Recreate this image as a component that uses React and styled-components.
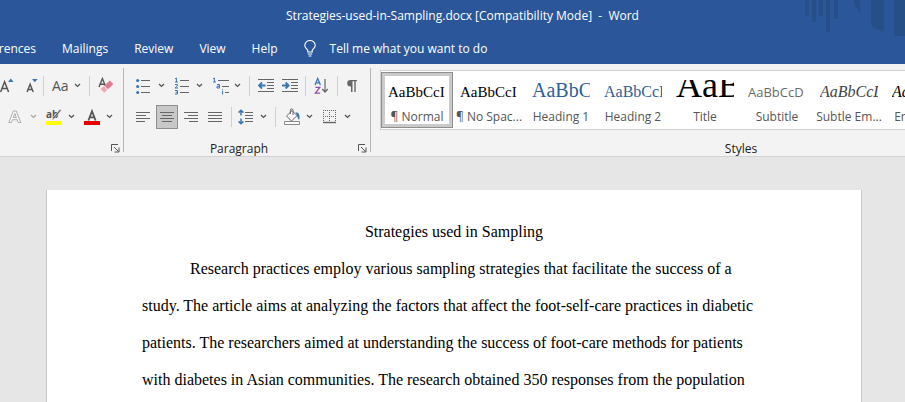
import React, { useState } from 'react';
import styled, { createGlobalStyle } from 'styled-components';

const tabs = ['Mailings', 'Review', 'View', 'Help'];

const styleList = [
  { name: '¶ Normal', sample: 'AaBbCcI', size: 15 },
  { name: '¶ No Spac...', sample: 'AaBbCcI', size: 15 },
  { name: 'Heading 1', sample: 'AaBbC', size: 20, color: '#2f5f96' },
  { name: 'Heading 2', sample: 'AaBbCcI', color: '#2f5f96' },
  { name: 'Title', sample: 'AaB', size: 36 },
  { name: 'Subtitle', sample: 'AaBbCcD', size: 13, color: '#6a6a6a', sans: true },
  { name: 'Subtle Em...', sample: 'AaBbCcL', color: '#444', italic: true },
  { name: 'Emphasis', sample: 'AaBbCcL', italic: true },
];

const alignments = [
  { name: 'Align Left', lines: [[0, 14], [0, 10], [0, 14], [0, 9]] },
  { name: 'Center', lines: [[0, 14], [2, 12], [0, 14], [2, 12]] },
  { name: 'Align Right', lines: [[0, 14], [4, 14], [0, 14], [5, 14]] },
  { name: 'Justify', lines: [[0, 14], [0, 14], [0, 14], [0, 14]] },
];

const Lines = ({ lines, top = 4, step = 3 }) =>
  lines.map(([from, to], idx) => (
    <path key={idx} d={`M${from} ${top + idx * step + 0.5}H${to}`} stroke="#666" />
  ));

const Chevron = ({ label, faded }) => (
  <ChevronButton aria-label={label}>
    <svg width="7" height="5" viewBox="0 0 7 5" fill="none" stroke={faded ? '#aaa' : '#555'} strokeWidth="1.3">
      <path d="M1 1L3.5 3.4L6 1" />
    </svg>
  </ChevronButton>
);

const Launcher = ({ label }) => (
  <LauncherButton aria-label={label}>
    <svg width="9" height="9" viewBox="0 0 9 9" fill="none" stroke="#555">
      <path d="M0.5 7V0.5H7M3 3L7.5 7.5M8 3.5V8H3.5" />
    </svg>
  </LauncherButton>
);

const FontGroup = () => (
  <Group $width={123}>
    <Row $end>
      <ToolButton aria-label="Increase Font Size">
        <svg width="18" height="18" viewBox="0 0 18 18">
          <path d="M4.6 15L8.6 4.8L12.6 15M6 11.6H11.2" fill="none" stroke="#555" strokeWidth="1.5" />
          <path d="M12 5L14.8 1.6L17.6 5Z" fill="#3a76b0" />
        </svg>
      </ToolButton>
      <ToolButton aria-label="Decrease Font Size">
        <svg width="18" height="18" viewBox="0 0 18 18">
          <path d="M7 15L10.1 7.2L13.2 15M8 12.5H12.2" fill="none" stroke="#555" strokeWidth="1.4" />
          <path d="M12 2L14.8 5.2L17.6 2Z" fill="#3a76b0" />
        </svg>
      </ToolButton>
      <Separator />
      <ToolButton aria-label="Change Case"><CaseText>Aa</CaseText></ToolButton>
      <Chevron label="Change Case options" />
      <Separator />
      <ToolButton aria-label="Clear All Formatting">
        <svg width="16" height="18" viewBox="0 0 16 18">
          <path d="M1 10L4.4 1.6L7.4 9M2.2 7.2H6.8" fill="none" stroke="#555" strokeWidth="1.4" />
          <path d="M2.5 12L5.6 9.2L9.2 12.8L6.3 15.8Z" fill="#f0a7b4" />
          <path d="M6.4 8.6L11.8 3.4L15.4 7L10 12.2Z" fill="#e27c91" />
        </svg>
      </ToolButton>
    </Row>
    <Row $end>
      <ToolButton aria-label="Text Effects">
        <svg width="14" height="16" viewBox="0 0 14 16">
          <path d="M0.8 13.5L5.4 2H8.2L12.8 13.5H10.2L9.2 10.7H4.4L3.4 13.5ZM5.2 8.6H8.4L6.8 4.4Z" fill="#fff" stroke="#aaa" />
        </svg>
      </ToolButton>
      <Chevron label="Text Effects options" faded />
      <ToolButton aria-label="Text Highlight Color">
        <svg width="16" height="18" viewBox="0 0 16 18">
          <text x="0" y="9.5" fontFamily="Open Sans, sans-serif" fontSize="10" fontWeight="700" fill="#555">ab</text>
          <path d="M15.6 2L8.5 10.5L6 12.3L7 9.4L13.8 1.6Z" fill="#666" stroke="#f3f3f3" strokeWidth="0.5" />
          <path d="M0 13H16V17H0Z" fill="#ff0" />
        </svg>
      </ToolButton>
      <Chevron label="Highlight options" />
      <ToolButton aria-label="Font Color">
        <svg width="16" height="18" viewBox="0 0 16 18">
          <path d="M4.4 12.5L8 3.2L11.6 12.5M5.6 9.3H10.4" fill="none" stroke="#555" strokeWidth="1.8" />
          <path d="M0 13H16V17H0Z" fill="#e60000" />
        </svg>
      </ToolButton>
      <Chevron label="Font Color options" />
    </Row>
    <Footer><Launcher label="Font Settings" /></Footer>
  </Group>
);

const ParagraphGroup = () => {
  const [align, setAlign] = useState('Center');
  return (
    <Group $width={246} $left={8}>
      <Row>
        <ToolButton aria-label="Bullets">
          <svg width="14" height="16" viewBox="0 0 14 16">
            <g fill="#3a76b0">
              <circle cx="1.7" cy="2.5" r="1.6" />
              <circle cx="1.7" cy="8.5" r="1.6" />
              <circle cx="1.7" cy="14.5" r="1.5" />
            </g>
            <path d="M5 2.5H14M5 8.5H14M5 14.5H14" stroke="#666" />
          </svg>
        </ToolButton>
        <Chevron label="Bullet options" />
        <ToolButton aria-label="Numbering">
          <svg width="16" height="18" viewBox="0 0 16 18" fill="none">
            <path d="M1 2L2.4 1V5M1 5H4M1 7.5H3.3V9L1 11H4M1 13.5H3.5V17H1M1.6 15.2H3.5" stroke="#3a76b0" />
            <path d="M6 3.5H15M6 9.5H15M6 15.5H15" stroke="#666" />
          </svg>
        </ToolButton>
        <Chevron label="Numbering options" />
        <ToolButton aria-label="Multilevel List">
          <svg width="18" height="18" viewBox="0 0 18 18" fill="none">
            <path d="M1 2L2.4 1V5M1 5H4M5 7.5H7.5V11H5V9.2H7.5M10.6 12.2V13.2M10.6 14V17.5" stroke="#3a76b0" />
            <path d="M6 3.5H17M10 9.5H17M13 15.5H17" stroke="#666" />
          </svg>
        </ToolButton>
        <Chevron label="Multilevel options" />
        <Separator />
        <ToolButton aria-label="Decrease Indent">
          <svg width="16" height="14" viewBox="0 0 16 14" fill="none">
            <path d="M0 0.5H16M9 3.5H16M9 6.5H16M9 9.5H16M0 12.5H16" stroke="#666" />
            <path d="M7.5 6.5H1.5M4 3.5L1 6.5L4 9.5" stroke="#3a76b0" strokeWidth="1.8" />
          </svg>
        </ToolButton>
        <ToolButton aria-label="Increase Indent">
          <svg width="16" height="14" viewBox="0 0 16 14" fill="none">
            <path d="M0 0.5H16M9 3.5H16M9 6.5H16M9 9.5H16M0 12.5H16" stroke="#666" />
            <path d="M0 6.5H6M3.6 3.5L6.6 6.5L3.6 9.5" stroke="#3a76b0" strokeWidth="1.8" />
          </svg>
        </ToolButton>
        <Separator />
        <ToolButton aria-label="Sort">
          <svg width="16" height="18" viewBox="0 0 16 18" fill="none">
            <path d="M1 8L3.7 1.5L6.4 8M2 5.8H5.4" stroke="#3a76b0" strokeWidth="1.3" />
            <path d="M1.4 10.3H5.8L1.4 16.2H6.2" stroke="#9350a8" strokeWidth="1.3" />
            <path d="M11 2V15M8.2 12L11 15L13.8 12" stroke="#666" strokeWidth="1.2" />
          </svg>
        </ToolButton>
        <Separator />
        <ToolButton aria-label="Show paragraph marks">
          <svg width="12" height="14" viewBox="0 0 12 14">
            <path d="M11 1H4.5A3.3 3.3 0 0 0 4.5 7.6H5V13H6.5V2.2H8.3V13H9.7V2.2H11Z" fill="#666" />
          </svg>
        </ToolButton>
      </Row>
      <Row>
        {alignments.map((item) => (
          <ToolButton
            key={item.name}
            aria-label={item.name}
            aria-pressed={align === item.name}
            $active={align === item.name}
            onClick={() => setAlign(item.name)}
          >
            <svg width="14" height="18" viewBox="0 0 14 18">
              <Lines lines={item.lines} />
            </svg>
          </ToolButton>
        ))}
        <Separator $width={6} />
        <ToolButton aria-label="Line Spacing">
          <svg width="15" height="16" viewBox="0 0 15 16" fill="none">
            <path d="M3 1.2V6.6M0.6 3.6L3 1.2L5.4 3.6M3 9.4V14.8M0.6 12.4L3 14.8L5.4 12.4" stroke="#3a76b0" strokeWidth="1.5" />
            <path d="M7 3.5H15M7 6.5H15M7 9.5H15M7 12.5H15" stroke="#666" />
          </svg>
        </ToolButton>
        <Chevron label="Line Spacing options" />
        <Separator />
        <ToolButton aria-label="Shading">
          <svg width="16" height="18" viewBox="0 0 16 18">
            <path d="M2.5 8L8 2.6L13 7.6L7.5 13Z" fill="#fff" stroke="#666" />
            <path d="M6.4 6V2.2A1.3 1.3 0 0 1 9 2.2V7" fill="none" stroke="#666" />
            <path d="M11.5 4.2C15 4.2 16 7 15.4 11.4C14.6 11.6 13.4 10 13.2 8Z" fill="#3a76b0" />
            <path d="M0.5 13.5H15.5V16.5H0.5Z" fill="#fff" stroke="#888" />
          </svg>
        </ToolButton>
        <Chevron label="Shading options" />
        <ToolButton aria-label="Borders">
          <svg width="14" height="14" viewBox="0 0 14 14" fill="none" stroke="#666">
            <path d="M1 0.5H14M1 6.5H14M1.5 0V12M7.5 0V12M13.5 0V12" strokeDasharray="1 1" />
            <path d="M1 12.5H14" strokeWidth="1.4" />
          </svg>
        </ToolButton>
        <Chevron label="Border options" />
      </Row>
      <Footer>
        <GroupLabel>Paragraph</GroupLabel>
        <Launcher label="Paragraph Settings" />
      </Footer>
    </Group>
  );
};

const StylesGroup = () => {
  const [current, setCurrent] = useState('¶ Normal');
  return (
    <Group $width={740}>
      <Gallery>
        {styleList.map((item) => (
          <StyleCell
            key={item.name}
            aria-pressed={current === item.name}
            $active={current === item.name}
            onClick={() => setCurrent(item.name)}
          >
            <Preview>
              <Sample $size={item.size} $color={item.color} $italic={item.italic} $sans={item.sans}>
                {item.sample}
              </Sample>
            </Preview>
            <StyleName>{item.name}</StyleName>
          </StyleCell>
        ))}
      </Gallery>
      <Footer><GroupLabel>Styles</GroupLabel></Footer>
    </Group>
  );
};

const App = () => {
  return (
    <Window>
      <GlobalStyle />
      <Header>
        <Pattern width="100" height="40" viewBox="0 0 100 40" fill="#264f88" aria-hidden="true">
          <path d="M0 0H4V16H0ZM7 0H11V22H7ZM14 0H18V16H14ZM21 0H25V32H21ZM29 0H33V19H29Z" />
          <path d="M48 0H55V14Q51 8 48 0ZM66 0H79V32Q71 30 66 25ZM89 0H100V36H89Z" />
        </Pattern>
        <TitleBar>Strategies-used-in-Sampling.docx [Compatibility Mode]&nbsp; -&nbsp; Word</TitleBar>
        <TabBar>
          <CutTab>References</CutTab>
          {tabs.map((tab) => <Tab key={tab}>{tab}</Tab>)}
          <TellMe>
            <svg width="12" height="17" viewBox="0 0 12 17" fill="none" stroke="#fff" strokeWidth="1.1">
              <path d="M3.8 12V10.4C3.4 9 0.8 8 0.8 5.4A5.2 4.9 0 0 1 11.2 5.4C11.2 8 8.6 9 8.2 10.4V12ZM3.8 14H8.2M4.6 16H7.4" />
            </svg>
            Tell me what you want to do
          </TellMe>
        </TabBar>
      </Header>
      <Ribbon>
        <FontGroup />
        <Divider />
        <ParagraphGroup />
        <Divider />
        <StylesGroup />
      </Ribbon>
      <Workspace>
        <Page>
          <DocTitle>Strategies used in Sampling</DocTitle>
          <Paragraph>
            Research practices employ various sampling strategies that facilitate the success of a
            study. The article aims at analyzing the factors that affect the foot-self-care practices in diabetic
            patients. The researchers aimed at understanding the success of foot-care methods for patients
            with diabetes in Asian communities. The research obtained 350 responses from the population
          </Paragraph>
        </Page>
      </Workspace>
    </Window>
  );
};

export default App;

const GlobalStyle = createGlobalStyle`
  * {
    box-sizing: border-box;
  }
  body {
    margin: 0;
    font-family: "Open Sans", "Noto Sans", sans-serif;
    font-size: 12px;
  }
  button {
    padding: 0;
    border: 0;
    background: none;
    color: inherit;
    font: inherit;
  }
`;
const Window = styled.div`
  display: flex;
  flex-direction: column;
  height: 100vh;
  overflow: hidden;
`;
const Header = styled.header`
  position: relative;
  flex: none;
  background-color: #2b579a;
  color: #fff;
`;
const Pattern = styled.svg`
  position: absolute;
  top: 0;
  right: 0;
`;
const TitleBar = styled.div`
  height: 32px;
  padding-left: 20px;
  line-height: 32px;
  text-align: center;
  white-space: nowrap;
`;
const TabBar = styled.nav`
  display: flex;
  align-items: center;
  gap: 26px;
  height: 32px;
`;
const Tab = styled.button`
  height: 32px;
  white-space: nowrap;
`;
const CutTab = styled(Tab)`
  display: flex;
  align-items: center;
  justify-content: flex-end;
  width: 36px;
  overflow: hidden;
`;
const TellMe = styled(Tab)`
  display: flex;
  align-items: center;
  gap: 14px;
`;
const Ribbon = styled.div`
  display: flex;
  flex: none;
  height: 93px;
  overflow: hidden;
  background-color: #f3f3f3;
  border-bottom: 1px solid #d2d2d2;
`;
const Divider = styled.div`
  flex: none;
  width: 1px;
  margin: 4px 0;
  background-color: #b5b5b5;
`;
const Group = styled.section`
  display: flex;
  flex: none;
  flex-direction: column;
  width: ${({ $width }) => $width}px;
  padding-top: 6px;
  padding-left: ${({ $left }) => $left || 0}px;
`;
const Row = styled.div`
  display: flex;
  align-items: center;
  justify-content: ${({ $end }) => ($end ? 'flex-end' : 'flex-start')};
  height: 31px;
  padding-right: ${({ $end }) => ($end ? 5 : 0)}px;
`;
const ToolButton = styled.button`
  display: flex;
  flex: none;
  align-items: center;
  width: 22px;
  height: 24px;
  margin-right: 2px;
  padding-left: ${({ $active }) => ($active ? 3 : 4)}px;
  border: ${({ $active }) => ($active ? '1px solid #8f8f8f' : '0')};
  background-color: ${({ $active }) => ($active ? '#c8c8c8' : 'transparent')};
  svg {
    flex: none;
  }
`;
const CaseText = styled.span`
  color: #555;
  font-size: 14px;
`;
const ChevronButton = styled.button`
  display: flex;
  flex: none;
  align-items: center;
  width: 14px;
  height: 24px;
  padding-left: 2px;
`;
const Separator = styled.span`
  flex: none;
  width: ${({ $width }) => $width || 8}px;
  height: 20px;
  &::before {
    content: '';
    display: block;
    width: 1px;
    height: 20px;
    margin-left: 3px;
    background-color: #d0d0d0;
  }
`;
const Footer = styled.div`
  display: flex;
  flex: 1;
  align-items: flex-end;
`;
const GroupLabel = styled.span`
  flex: 1;
  color: #222;
  line-height: 15px;
  text-align: center;
`;
const LauncherButton = styled.button`
  display: flex;
  align-items: center;
  justify-content: flex-end;
  width: 24px;
  height: 16px;
  margin-left: auto;
  padding-right: 3px;
`;
const Gallery = styled.div`
  display: flex;
  height: 60px;
  margin-left: 9px;
  padding: 1px 0;
  background-color: #fff;
  border: 1px solid #cfcfcf;
  border-right: 0;
`;
const StyleCell = styled.button`
  display: flex;
  flex: none;
  flex-direction: column;
  width: 72px;
  height: 56px;
  padding: 7px 6px 0;
  border: 1px solid ${({ $active }) => ($active ? '#8f8f8f' : 'transparent')};
  box-shadow: ${({ $active }) => ($active ? 'inset 0 0 0 3px #cacaca' : 'none')};
`;
const Preview = styled.div`
  width: 58px;
  height: 26px;
  overflow: hidden;
  font-family: "Liberation Serif", serif;
  font-size: 16px;
  line-height: 24px;
  text-align: left;
  white-space: nowrap;
`;
const Sample = styled.span`
  color: ${({ $color }) => $color || '#000'};
  font-family: ${({ $sans }) => ($sans ? '"Open Sans", sans-serif' : 'inherit')};
  font-size: ${({ $size }) => $size || 16}px;
  font-style: ${({ $italic }) => ($italic ? 'italic' : 'normal')};
  line-height: 0;
`;
const StyleName = styled.div`
  align-self: center;
  margin-top: 3px;
  color: #555;
  line-height: 16px;
  white-space: nowrap;
`;
const Workspace = styled.main`
  flex: 1;
  min-height: 0;
  padding: 33px 43px 0 46px;
  overflow: hidden;
  background-color: #e6e6e6;
`;
const Page = styled.article`
  min-height: 100%;
  padding: 23px 95px 0;
  background-color: #fff;
  border: 1px solid #c6c6c6;
  border-width: 0 1px;
  font-family: "Liberation Serif", "Times New Roman", serif;
  font-size: 16px;
  line-height: 37px;
`;
const DocTitle = styled.h1`
  margin: 0;
  font-size: 16px;
  font-weight: 400;
  text-align: center;
`;
const Paragraph = styled.p`
  margin: 0;
  text-indent: 48px;
`;
